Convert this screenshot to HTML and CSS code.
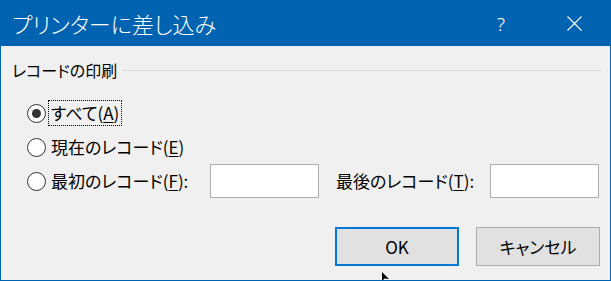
FILE: index.html
```html
<!DOCTYPE html>
<html lang="ja">
<head>
  <meta charset="UTF-8">
  <title>プリンターに差し込み</title>
  <link rel="stylesheet" href="styles.css">
</head>
<body>

<div class="window">
  <div class="titlebar">
    <span class="title">プリンターに差し込み</span>
    <span class="help">?</span>
    <svg class="close" viewBox="0 0 15 15" width="15" height="15">
      <path d="M0.5 0.5L14.5 14.5M14.5 0.5L0.5 14.5" stroke="white" stroke-width="1.1" fill="none"/>
    </svg>
  </div>

  <div class="content">
    <div class="group-head">
      <span>レコードの印刷</span>
      <div class="group-line"></div>
    </div>

    <div class="row">
      <span class="radio checked"></span>
      <span class="label focus">すべて(<u>A</u>)</span>
    </div>
    <div class="row">
      <span class="radio"></span>
      <span class="label">現在のレコード(<u>E</u>)</span>
    </div>
    <div class="row">
      <span class="radio"></span>
      <span class="label first-label">最初のレコード(<u>F</u>):</span>
      <input type="text" class="field">
      <span class="label last-label">最後のレコード(<u>T</u>):</span>
      <input type="text" class="field">
    </div>

    <div class="buttons">
      <button type="button" class="btn btn-default">OK</button>
      <button type="button" class="btn">キャンセル</button>
    </div>
  </div>

  <!-- mouse pointer left over the dialog -->
  <svg class="pointer" viewBox="0 0 8 10" width="8" height="10">
    <path d="M0 0L0 9L2.5 6.5L7 7Z" fill="black"/>
  </svg>
</div>

</body>
</html>
```

FILE: styles.css
```css
body {
  margin: 0;
  font-family: "Noto Sans", "Noto Sans CJK JP", sans-serif;
  background: #f0f0f0;
}

.window {
  position: relative;
  width: 611px;
  height: 281px;
  box-sizing: border-box;
  border: 1px solid #0063b1;
  border-top: 0;
  background: #f0f0f0;
  overflow: hidden;
}

.titlebar {
  height: 46px;
  background: #0063b1;
  display: flex;
  align-items: center;
  padding-left: 11px;
  color: white;
}
.title {
  font-family: "Noto Sans CJK JP", sans-serif;
  font-feature-settings: "palt";
  font-size: 22px;
  font-weight: 300;
  flex: 1;
}
.help {
  font-family: "Noto Sans", sans-serif;
  font-size: 19px;
  font-weight: 300;
  margin-right: 62px;
  margin-top: 1px;
}
.close {
  margin-right: 28px;
  margin-top: 1px;
}

.content {
  padding: 14px 9px 0 11px;
  font-size: 17px;
  color: #000;
}

.group-head {
  height: 20px;
  display: flex;
  align-items: center;
  gap: 6px;
  margin-bottom: 16px;
  font-family: "Noto Sans CJK JP", sans-serif;
  font-feature-settings: "palt";
  font-size: 16px;
}
.group-line {
  flex: 1;
  height: 1px;
  background: #dcdcdc;
}

.row {
  height: 34px;
  display: flex;
  align-items: center;
  padding-left: 15px;
}

.radio {
  width: 17px;
  height: 17px;
  border: 1.5px solid #333;
  border-radius: 50%;
  background: #fff;
  display: flex;
  justify-content: center;
  align-items: center;
  margin-right: 4px;
}
.radio.checked::after {
  content: "";
  width: 9px;
  height: 9px;
  border-radius: 50%;
  background: #333;
}

.label {
  font-family: "Noto Sans CJK JP", sans-serif;
  font-feature-settings: "palt";
  line-height: 22px;
  padding: 0 1px;
}
.label u {
  text-underline-offset: 2px;
}
.focus {
  border: 1px dotted #000;
  margin-left: -2px;
  padding: 1px 2px;
}

.first-label {
  width: 158px;
}
.last-label {
  width: 153px;
  margin-left: 16px;
}

.field {
  width: 109px;
  height: 34px;
  box-sizing: border-box;
  border: 1px solid #adadad;
  background: #fff;
  margin: 0;
  padding: 0 4px;
  outline: none;
}

.buttons {
  display: flex;
  justify-content: flex-end;
  gap: 17px;
  margin-top: 29px;
  padding-right: 1px;
}
.btn {
  width: 124px;
  height: 39px;
  box-sizing: border-box;
  border: 1px solid #adadad;
  background: #e1e1e1;
  font-family: "Noto Sans CJK JP", sans-serif;
  font-feature-settings: "palt";
  font-size: 17px;
  color: #000;
  padding: 0;
}
.btn-default {
  border: 2px solid #0078d7;
}

.pointer {
  position: absolute;
  left: 381px;
  top: 272px;
}
```
